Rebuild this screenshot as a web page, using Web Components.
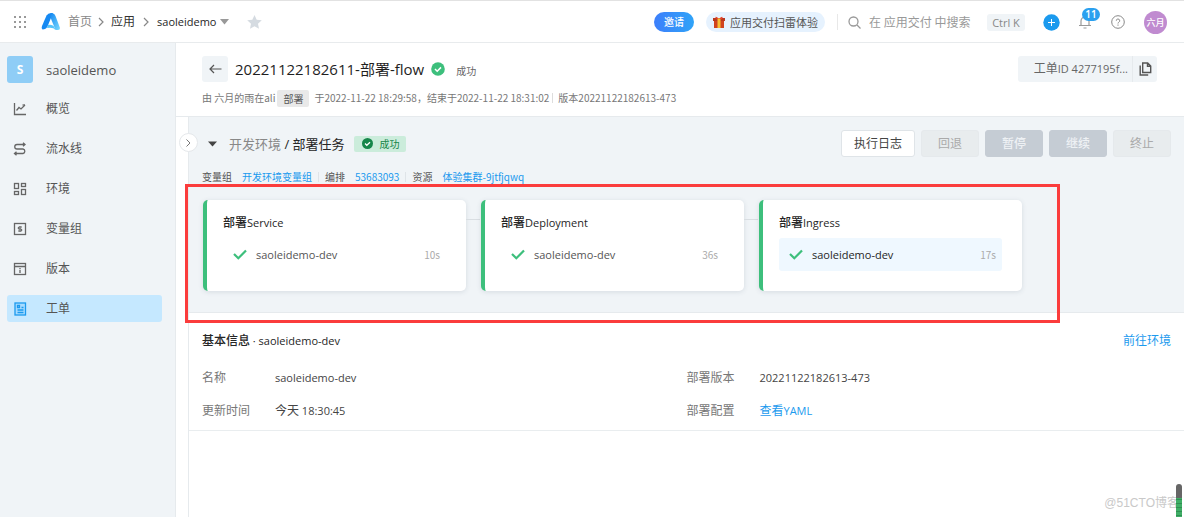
<!DOCTYPE html>
<html lang="zh-CN">
<head>
<meta charset="utf-8">
<title>saoleidemo - 工单</title>
<style>
  html, body { margin: 0; height: 100%; }
  body {
    font: 12px/18px "Open Sans", "Noto Sans CJK SC", sans-serif;
    color: #333;
    background: #fff;
    --panel: #f0f4f7;
    --line: #e6eaed;
    --blue: #1b9aee;
    --green: #3dbf7c;
    --small-font: "Noto Sans CJK SC", sans-serif;
  }
</style>
</head>
<body>
<app-shell>
  <top-bar slot="top"></top-bar>
  <side-nav slot="side">
    <nav-item icon="chart">概览</nav-item>
    <nav-item icon="flow">流水线</nav-item>
    <nav-item icon="grid">环境</nav-item>
    <nav-item icon="dollar">变量组</nav-item>
    <nav-item icon="version">版本</nav-item>
    <nav-item icon="order" active>工单</nav-item>
  </side-nav>
  <order-header></order-header>
  <task-panel>
    <stage-card name="Service" time="10s">部署</stage-card>
    <stage-card name="Deployment" time="36s">部署</stage-card>
    <stage-card name="Ingress" time="17s" selected>部署</stage-card>
  </task-panel>
  <info-panel></info-panel>
</app-shell>

<script>
const define = (name, html, setup) => {
  const template = document.createElement('template');
  template.innerHTML = html;
  customElements.define(name, class extends HTMLElement {
    constructor() {
      super();
      this.attachShadow({ mode: 'open' }).append(template.content.cloneNode(true));
    }
    connectedCallback() { if (setup) setup(this, this.shadowRoot); }
  });
};

const reset = `
  :host, *, *::before, *::after { box-sizing: border-box; }
  a { color: inherit; text-decoration: none; }
  button, input { font: inherit; color: inherit; margin: 0; padding: 0; border: 0; background: none; }
  svg { display: block; flex: none; }
  h1, h2, h3, p, dl, dt, dd { margin: 0; font-weight: inherit; font-size: inherit; }
`;

const icons = {
  chart: '<path d="M1.5 1v11.5H13M3.5 8.5 6 5.5l2 1.5 4-4"/><path d="M9.5 3H12"/>',
  flow: '<path d="M11.5 2.5H4a2.2 2.2 0 0 0 0 4.500h6a2.300 2.300 0 0 1 0 4.500H2M10 .8l2 1.700-2 1.700M3.500 9.800l-2 1.700 2 1.700"/>',
  grid: '<rect x="1.500" y="1.500" width="4" height="5"/><rect x="8.500" y="1.500" width="4" height="3"/><rect x="1.500" y="9.500" width="4" height="3"/><rect x="8.500" y="7.500" width="4" height="5"/>',
  dollar: '<rect x="1.500" y="1.500" width="11" height="11"/><path d="M9 5H6.200a1 1 0 0 0 0 2h1.600a1 1 0 0 1 0 2H5M7 4v6" stroke-width="1.100"/>',
  version: '<rect x="1.500" y="1.500" width="11" height="11"/><path d="M1.500 4.500h11M7 6v1M7 7.800V11"/>',
  order: '<rect x="2" y="1" width="10.500" height="12" fill="#a9dcff"/><path d="M4.500 3.500h2v2h-2zM8.500 5.500h2M4.500 8h6M4.500 10.500h6"/>'
};

define('app-shell', `
<style>${reset}
  :host { display: grid; position: relative; grid-template: auto 1fr / 176px minmax(0, 1fr); min-height: 100vh; }
  slot[name=top] { display: block; grid-column: 1 / -1; }
  slot[name=side] { display: grid; }
  main { display: flex; flex-direction: column; min-width: 0; }
  .mark { position: absolute; right: 5px; bottom: 5px; color: #c9c9c9; font: 12px/18px "Liberation Sans", "Noto Sans CJK SC", sans-serif; }
  .thumb { position: absolute; right: 2px; bottom: 0; width: 6px; height: 33px; border-radius: 3px 3px 0 0;
    background: linear-gradient(#666 14px, transparent 14px), repeating-linear-gradient(#3fae66 0 3px, #2f8f52 3px 4px); }
</style>
<slot name="top"></slot>
<slot name="side"></slot>
<main><slot></slot></main>
<span class="mark">@51CTO博客</span>
<span class="thumb"></span>`);

define('top-bar', `
<style>${reset}
  :host { display: block; }
  header { display: flex; align-items: center; height: 43px; padding: 1px 17px 0 14px; border-top: 1px solid #e2e2e2; border-bottom: 1px solid #e8ebed; background: #fff; }
  nav { display: flex; align-items: center; }
  .logo { margin: 0 7px 0 15px; }
  .muted { color: #888; }
  .sep { margin: 0 7px 0 6px; }
  .sep.wide { margin: 0 8px; }
  .app { display: flex; align-items: center; gap: 4px; font-size: 11px; font-weight: 500; color: #262626; }
  .star { margin-left: 18px; }
  .right { display: flex; align-items: center; margin-left: auto; }
  .invite { width: 40px; height: 20px; border-radius: 10px; color: #fff; font: 500 10px/20px var(--small-font); background: linear-gradient(90deg, #3d7ffb, #2fa3f8); }
  .gift { display: flex; align-items: center; gap: 5px; height: 20px; margin-left: 12px; padding: 0 7px; border-radius: 10px; background: #e6f2fe; color: #555; font: 11px/20px var(--small-font); }
  .bar { width: 1px; height: 16px; margin: 0 10px 0 12px; background: #e8e8e8; }
  label { display: flex; align-items: center; gap: 8px; }
  input { width: 110px; outline: 0; font: 12px/18px var(--small-font); }
  input::placeholder { color: #999; opacity: 1; }
  kbd { width: 38px; height: 17px; margin-left: 8px; border-radius: 3px; background: var(--panel); color: #888; font: 11px/17px "Open Sans", sans-serif; text-align: center; }
  .plus { margin-left: 18px; }
  .bell { position: relative; margin-left: 18px; }
  .bell b { position: absolute; left: 4px; top: -7px; width: 18px; height: 13px; border-radius: 7px; background: #2aa0ef; color: #fff; font: 600 10px/13px "Open Sans", sans-serif; text-align: center; }
  .help { margin-left: 19px; }
  .avatar { width: 23px; height: 23px; margin-left: 19px; border-radius: 50%; background: #c08bd0; color: #fff; font: 500 9px/23px var(--small-font); text-align: center; white-space: nowrap; }
</style>
<header>
  <nav>
    <svg width="12" height="12" fill="#999"><rect width="2" height="2"/><rect x="5" width="2" height="2"/><rect x="10" width="2" height="2"/><rect y="5" width="2" height="2"/><rect x="5" y="5" width="2" height="2"/><rect x="10" y="5" width="2" height="2"/><rect y="10" width="2" height="2"/><rect x="5" y="10" width="2" height="2"/><rect x="10" y="10" width="2" height="2"/></svg>
    <svg class="logo" width="20" height="18" viewBox="0 0 20 18"><defs><linearGradient id="lg" x1="0" x2="1" y1="0" y2="1"><stop stop-color="#1285f0"/><stop offset="1" stop-color="#7cdcff"/></linearGradient></defs><path d="M10 0h2L6.500 13.500Q5 16.500 1.500 16.500 0 15.500 1 13L5.500 2.500Q7 0 10 0z" fill="#1689f2"/><path d="M9 1q4-2 5.500 2L19 15q0 2-2 2h-2.500L9.500 4.500z" fill="url(#lg)"/><path d="M7 12q4-1 6 1.500l1.500 3.500q-2-3-8.500-2z" fill="#55c4fb"/></svg>
    <a class="muted" href="#">首页</a>
    <svg class="sep" width="6" height="10" fill="none" stroke="#888" stroke-width="1.200"><path d="m1 1 4 4-4 4"/></svg>
    <a href="#">应用</a>
    <svg class="sep wide" width="6" height="10" fill="none" stroke="#888" stroke-width="1.200"><path d="m1 1 4 4-4 4"/></svg>
    <a class="app" href="#">saoleidemo <svg width="9" height="6"><path d="M0 0h9L4.500 5.500z" fill="#999"/></svg></a>
    <svg class="star" width="15" height="14" viewBox="0 0 15 14"><path d="m7.500 0 2.200 4.700 5.100.6-3.800 3.500 1 5-4.500-2.500L3 13.800l1-5L.200 5.300l5.100-.6z" fill="#d5dbe1"/></svg>
  </nav>
  <div class="right">
    <button class="invite">邀请</button>
    <a class="gift" href="#"><svg width="12" height="12"><path d="M1 4h10v8H1z" fill="#d0431f"/><path d="M0 2h12v3H0z" fill="#b9381f"/><path d="M4.500 2h3v10h-3z" fill="#f7be35"/><path d="M6 3C3-.5 1.500.5 3 2.500zM6 3c3-3.500 4.500-2.500 3 0z" fill="#e6452c"/></svg><span>应用交付扫雷体验</span></a>
    <span class="bar"></span>
    <label aria-label="搜索"><svg width="13" height="13" fill="none" stroke="#999" stroke-width="1.300"><circle cx="5.500" cy="5.500" r="4.500"/><path d="m9 9 3.500 3.500"/></svg><input type="text" placeholder="在 应用交付 中搜索"></label>
    <kbd>Ctrl K</kbd>
    <button class="plus" aria-label="新建"><svg width="17" height="17"><circle cx="8.500" cy="8.500" r="8.200" fill="#1b9aee"/><path d="M8.500 5v7M5 8.500h7" stroke="#fff"/></svg></button>
    <button class="bell" aria-label="通知"><svg width="14" height="14" fill="none" stroke="#999" stroke-width="1.200"><path d="M3 10.500V6a4 4 0 0 1 8 0v4.500M1 10.500h12M5.500 13h3"/></svg><b>11</b></button>
    <button class="help" aria-label="帮助"><svg width="14" height="14" fill="none" stroke="#888"><circle cx="7" cy="7" r="6.300"/><path d="M5.300 5.700a1.700 1.700 0 1 1 2.500 1.500q-.8.400-.8 1.300M7 9.500v1.200"/></svg></button>
    <span class="avatar">六月</span>
  </div>
</header>`);

define('side-nav', `
<style>${reset}
  :host { display: block; background: var(--panel); border-right: 1px solid var(--line); }
  .app { display: flex; align-items: center; gap: 13px; margin: 13px 7px 12px; color: #555; font-size: 13px; }
  .mark { width: 26px; height: 27px; border-radius: 3px; background: #8fcdf6; color: #fff; font-weight: 700; font-size: 12px; line-height: 27px; text-align: center; }
  nav { display: grid; gap: 13px; padding: 0 13px 0 7px; }
</style>
<div class="app"><span class="mark">S</span><span>saoleidemo</span></div>
<nav><slot></slot></nav>`);

define('nav-item', `
<style>${reset}
  :host { display: block; color: #555; --ink: #666; }
  :host([active]) { border-radius: 3px; background: #c5e8ff; --ink: #1b9aee; }
  a { display: flex; align-items: center; gap: 19px; height: 27px; padding-left: 6px; }
  svg { fill: none; stroke: var(--ink); stroke-width: 1.300; }
</style>
<a href="#"><svg width="14" height="14" viewBox="0 0 14 14"></svg><slot></slot></a>`,
(host, root) => { root.querySelector('svg').innerHTML = icons[host.getAttribute('icon')]; });

define('order-header', `
<style>${reset}
  :host { display: block; padding: 13px 27px 9px 26px; border-bottom: 1px solid var(--line); }
  .row { display: flex; align-items: center; }
  .back { display: grid; place-items: center; width: 26px; height: 26px; border-radius: 3px; background: var(--panel); }
  h1 { margin: 0 7px; color: #1f1f1f; font: 500 15px/24px "Open Sans", "Noto Sans CJK SC", sans-serif; }
  h1 span { font-weight: 400; }
  .state { margin: 3px 0 0 11px; font: 10px/18px var(--small-font); color: #666; }
  .id { display: flex; margin-left: auto; height: 26px; border-radius: 3px; background: var(--panel); color: #666; line-height: 26px; }
  .id > span { padding: 0 4px 0 16px; border-right: 1px solid var(--line); }
  .id i { font-style: normal; font-size: 11px; }
  .id button { display: grid; place-items: center; width: 24px; }
  .meta { margin-top: 7px; font: 10px/18px var(--small-font); color: #777; white-space: pre; }
  .chip { height: 17px; margin: 0 5px 0 2px; padding: 0 6px; border-radius: 2px; background: #e9e9e9; line-height: 17px; color: #555; }
  .bar { width: 1px; height: 10px; margin: 0 5px 0 3px; background: #ddd; }
</style>
<div class="row">
  <button class="back" aria-label="返回"><svg width="13" height="10" fill="none" stroke="#555" stroke-width="1.200"><path d="M12.500 5H1M5 1 1 5l4 4"/></svg></button>
  <h1>20221122182611-<span>部署</span>-flow</h1>
  <svg width="14" height="14"><circle cx="7" cy="7" r="6.800" fill="#3dbf7c"/><path d="m4 7 2.200 2.200L10 5.400" fill="none" stroke="#fff" stroke-width="1.500"/></svg>
  <span class="state">成功</span>
  <div class="id"><span>工单<i>ID 4277195f...</i></span><button aria-label="复制"><svg width="13" height="14" fill="none" stroke="#555" stroke-width="1.400"><path d="M3.700 1h5l3 3v6.500h-8zM8.500 1v3.200h3.200M1.200 3.500V13h8"/></svg></button></div>
</div>
<div class="row meta"><span>由 六月的雨在ali</span><span class="chip">部署</span><span>于2022-11-22 18:29:58，结束于2022-11-22 18:31:02</span><span class="bar"></span><span>版本20221122182613-473</span></div>`);

define('task-panel', `
<style>${reset}
  :host { display: block; position: relative; margin-left: 12px; padding: 13px 13px 21px; border-left: 1px solid var(--line); border-bottom: 1px solid var(--line); background: var(--panel); }
  .row { display: flex; align-items: center; }
  .fold { position: absolute; left: -10px; top: 16px; display: grid; place-items: center; width: 19px; height: 19px; border-radius: 50%; border: 1px solid #e5e8eb; background: #fff; }
  .caret { margin: 0 12px 0 6px; }
  h2 { font-size: 13px; line-height: 20px; color: #262626; }
  h2 span { color: #888; }
  .tag { display: flex; align-items: center; gap: 7px; height: 16px; margin-left: 9px; padding: 0 6px 0 8px; border-radius: 2px; background: #cbecdb; color: #16864a; font: 10px/16px var(--small-font); }
  .tools { display: flex; gap: 6px; margin-left: auto; }
  .tools button { width: 58px; height: 27px; border-radius: 3px; border: 1px solid #e5e9ec; background: #e8ecee; color: #aaa; }
  .tools .log { width: 74px; background: #fff; border-color: #dfe4e8; color: #444; }
  .tools .solid { background: #c5ccd4; border-color: #c5ccd4; color: #eef1f4; font-weight: 500; }
  .refs { margin-top: 11px; font: 10px/18px var(--small-font); color: #555; }
  .refs a { margin-left: 10px; color: var(--blue); }
  .refs i { width: 1px; height: 10px; margin: 0 6px; background: #dfe4e8; }
  .flow { display: flex; gap: 15px; margin-top: 14px; padding-left: 1px; }
  .frame { position: absolute; left: -4px; top: 67px; width: 875px; height: 139px; border: 3px solid #fb3c3c; pointer-events: none; z-index: 1; }
</style>
<button class="fold" aria-label="展开"><svg width="5" height="8" fill="none" stroke="#777"><path d="m.5.5 3.500 3.500L.5 7.500"/></svg></button>
<div class="row">
  <svg class="caret" width="9" height="6"><path d="M0 .5h9L4.500 5.500z" fill="#444"/></svg>
  <h2><span>开发环境</span> / 部署任务</h2>
  <span class="tag"><svg width="11" height="11"><circle cx="5.500" cy="5.500" r="5.500" fill="#16864a"/><path d="m3 5.500 1.800 1.800L8 4.200" fill="none" stroke="#fff" stroke-width="1.300"/></svg>成功</span>
  <div class="tools"><button class="log">执行日志</button><button disabled>回退</button><button class="solid" disabled>暂停</button><button class="solid" disabled>继续</button><button disabled>终止</button></div>
</div>
<div class="row refs"><span>变量组</span><a href="#">开发环境变量组</a><i></i><span>编排</span><a href="#">53683093</a><i></i><span>资源</span><a href="#">体验集群-9jtfjqwq</a></div>
<div class="flow"><slot></slot></div>
<span class="frame"></span>`);

define('stage-card', `
<style>${reset}
  :host { display: block; position: relative; flex: 0 1 263px; height: 91px; padding: 14px 20px 0 16px; border-left: 4px solid var(--green); border-radius: 5px; background: #fff; box-shadow: 0 1px 5px rgba(60, 80, 100, .14); }
  :host(:not([selected]))::after { content: ""; position: absolute; left: 100%; top: 19px; width: 14px; height: 1px; background: #d9dee2; }
  h3 { color: #262626; font-weight: 500; line-height: 18px; }
  h3 span, .row { font-size: 11px; }
  .row { display: flex; align-items: center; gap: 9px; height: 33px; margin-top: 6px; padding: 0 6px 0 10px; border-radius: 3px; color: #555; }
  :host([selected]) .row { background: #eff8ff; color: #262626; font-weight: 500; }
  time { margin-left: auto; font: 10px/18px var(--small-font); color: #aaa; }
</style>
<h3><slot></slot><span class="name"></span></h3>
<div class="row"><svg width="14" height="11" fill="none" stroke="#3dbf7c" stroke-width="2.200"><path d="m1 5 4.300 4.300L13 1.500"/></svg><span>saoleidemo-dev</span><time></time></div>`,
(host, root) => {
  root.querySelector('.name').textContent = host.getAttribute('name');
  root.querySelector('time').textContent = host.getAttribute('time');
});

define('info-panel', `
<style>${reset}
  :host { display: block; flex: 1; margin-left: 12px; border-left: 1px solid var(--line); }
  section { padding: 18px 13px 9px; border-bottom: 1px solid #e9edef; }
  .head { display: flex; justify-content: space-between; line-height: 20px; }
  h2 { font-weight: 500; color: #262626; }
  .l { font-size: 11px; }
  a { color: var(--blue); }
  dl { display: grid; grid-template-columns: 1fr 1fr; gap: 13px 0; margin-top: 17px; line-height: 20px; }
  dl div { display: grid; grid-template-columns: 73px 1fr; }
  dt { color: #777; }
  dd { color: #444; }
</style>
<section>
  <div class="head"><h2>基本信息<span class="l"> · saoleidemo-dev</span></h2><a href="#">前往环境</a></div>
  <dl>
    <div><dt>名称</dt><dd class="l">saoleidemo-dev</dd></div>
    <div><dt>部署版本</dt><dd class="l">20221122182613-473</dd></div>
    <div><dt>更新时间</dt><dd>今天<span class="l"> 18:30:45</span></dd></div>
    <div><dt>部署配置</dt><dd><a href="#">查看<span class="l">YAML</span></a></dd></div>
  </dl>
</section>`);
</script>
</body>
</html>
